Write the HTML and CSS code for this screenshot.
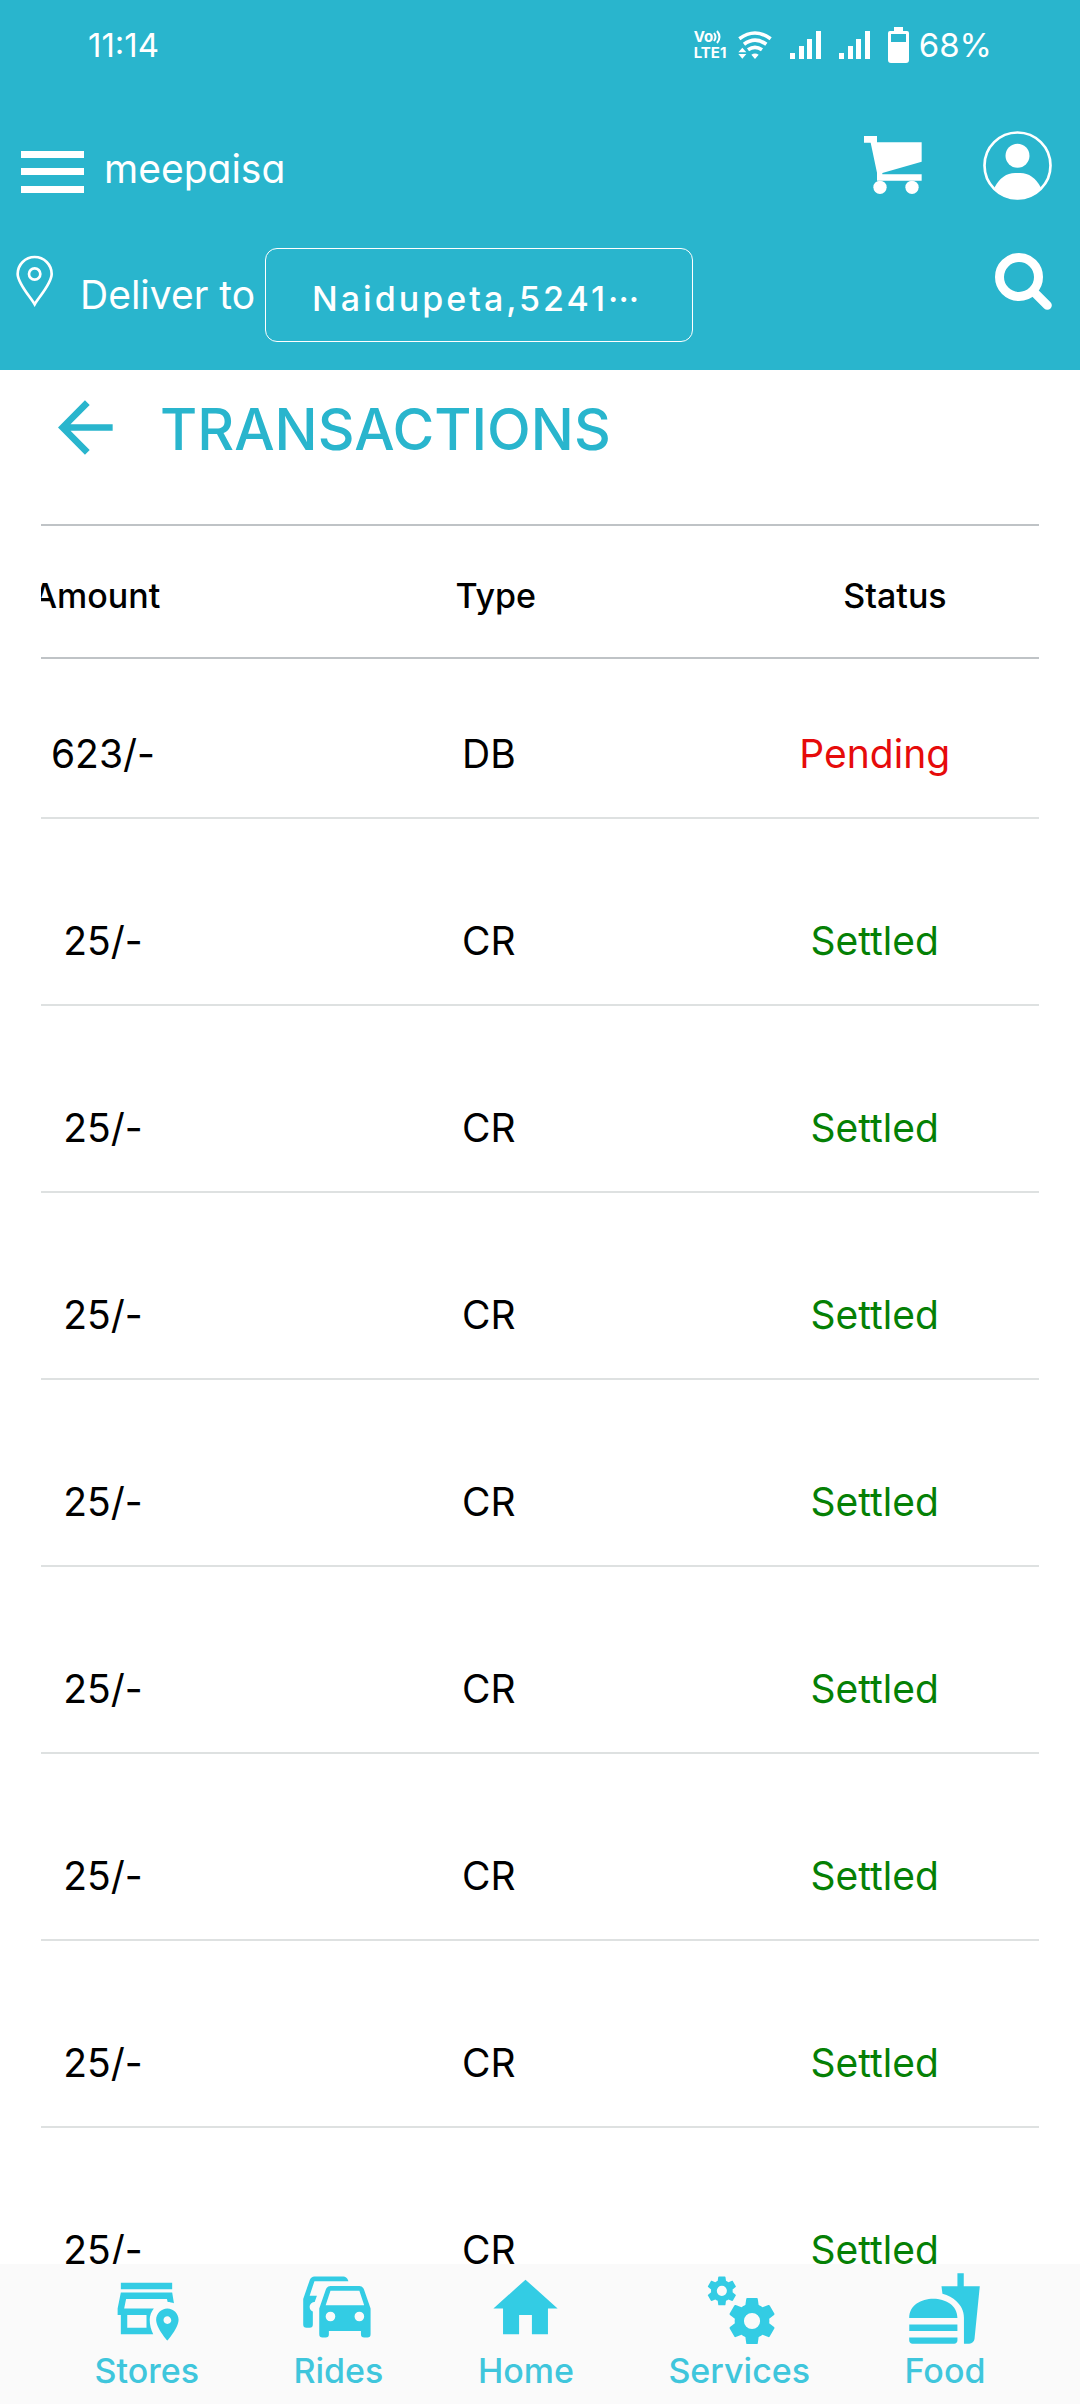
FILE: index.html
```html
<!DOCTYPE html>
<html lang="en">
<head>
<meta charset="utf-8">
<meta name="viewport" content="width=device-width, initial-scale=1">
<title>meepaisa - Transactions</title>
<link rel="stylesheet" href="styles.css">
</head>
<body>
<header class="header">
  <div class="status-bar">
    <span class="status-text">11:14</span>
    <div class="status-icons">
      <div class="status-group network">
        <div class="volte">
          <span class="volte-line">Vo<svg width="9" height="14" viewBox="0 0 9 14" fill="none" stroke="currentColor" stroke-width="2"><path d="M1 3Q4 7 1 11M4 1Q9 7 4 13"/></svg></span>
          <span class="volte-line">LTE1</span>
        </div>
        <svg width="34" height="28" viewBox="182 57 102 84" fill="none" stroke="#fff" stroke-width="11"><path d="M186 80Q233 46 280 80M200 97Q233 72 267 97M212 113Q233 99 254 113"/><path stroke="none" fill="#fff" d="M222 128Q233 121 244 128L233 141zM183 121L195 107L207 121zM183 126H207L195 140z"/></svg>
      </div>
      <svg width="31" height="28" viewBox="0 0 31 28" fill="#fff"><path d="M0 22h5v6H0zM9 15h5v13H9zM17 8h5v20h-5zM26 0h5v28h-5z"/></svg>
      <svg width="31" height="28" viewBox="0 0 31 28" fill="#fff"><path d="M0 22h5v6H0zM9 15h5v13H9zM17 8h5v20h-5zM26 0h5v28h-5z"/></svg>
      <div class="status-group battery">
        <svg width="21" height="36" viewBox="0 0 21 36" fill="#fff" fill-rule="evenodd"><path d="M6 0H15V4H19Q21 4 21 6V33Q21 36 18 36H3Q0 36 0 33V6Q0 4 2 4H6zM3 7V15H18V7z"/></svg>
        <span class="status-text">68%</span>
      </div>
    </div>
  </div>

  <div class="brand-row">
    <div class="brand">
      <button class="icon-button" aria-label="Open menu"><svg width="63" height="42" viewBox="0 0 63 42" fill="#fff"><path d="M0 0h63v7H0zM0 17h63v7H0zM0 35h63v7H0z"/></svg></button>
      <a class="brand-name" href="#">meepaisa</a>
    </div>
    <div class="account">
      <button class="icon-button" aria-label="Cart"><svg width="58" height="58" viewBox="0 0 174 174" fill="#fff"><path d="M0 0H39V19H173V77L55 111V115H173V134H39V110L20 20H0z"/><circle cx="48" cy="154" r="20"/><circle cx="144" cy="154" r="20"/></svg></button>
      <button class="icon-button" aria-label="Account"><svg width="69" height="69" viewBox="432 62 207 207" fill="#fff"><circle cx="535.5" cy="165.500" r="99" fill="none" stroke="#fff" stroke-width="8"/><circle cx="535.5" cy="136" r="36"/><path d="M466 232Q490 188 528 188H544Q582 188 606 232Q578 267 535.500 267T466 232z"/></svg></button>
    </div>
  </div>

  <div class="deliver-row">
    <svg class="pin" width="38" height="52" viewBox="47 104 114 156" fill="none" stroke="#fff" stroke-width="8"><path d="M103 252C92 232 52 190 52 161A51 51 0 0 1 154 161C154 190 114 232 103 252z"/><circle cx="103" cy="161" r="17"/></svg>
    <span class="deliver-label">Deliver to</span>
    <button class="place">Naidupeta,5241<span class="place-more">···</span></button>
    <button class="icon-button search" aria-label="Search"><svg width="57" height="57" viewBox="468 429 171 171" fill="none" stroke="#fff" stroke-width="27"><circle cx="540" cy="501" r="58.500"/><path d="M583 544L625 586" stroke-linecap="round"/></svg></button>
  </div>
</header>

<main class="content">
  <div class="title-row">
    <button class="icon-button back" aria-label="Back"><svg width="55" height="55" viewBox="173 538 165 165" fill="none" stroke="currentColor" stroke-width="20"><path d="M337 620.500H190M261 546L187 620.500L261 695"/></svg></button>
    <h1 class="title">TRANSACTIONS</h1>
  </div>
  <div class="table-wrap">
    <table class="transactions">
      <thead><tr><th>Amount</th><th>Type</th><th>Status</th></tr></thead>
      <tbody>
        <tr><td>623/-</td><td>DB</td><td class="pending">Pending</td></tr>
        <tr><td>25/-</td><td>CR</td><td class="settled">Settled</td></tr>
        <tr><td>25/-</td><td>CR</td><td class="settled">Settled</td></tr>
        <tr><td>25/-</td><td>CR</td><td class="settled">Settled</td></tr>
        <tr><td>25/-</td><td>CR</td><td class="settled">Settled</td></tr>
        <tr><td>25/-</td><td>CR</td><td class="settled">Settled</td></tr>
        <tr><td>25/-</td><td>CR</td><td class="settled">Settled</td></tr>
        <tr><td>25/-</td><td>CR</td><td class="settled">Settled</td></tr>
        <tr><td>25/-</td><td>CR</td><td class="settled">Settled</td></tr>
      </tbody>
    </table>
  </div>
</main>

<nav class="tabs">
  <a class="tab" href="#"><svg class="tab-icon" viewBox="0 0 24 24" fill-rule="evenodd"><path d="M4 4H20V6H4zM4 7L3 12V14H4V20H14.100C13.400 18.700 13 17 13 15.500C13 14.200 13.500 13 14.300 12H5.040L5.640 9H18.360L18.600 10C19.300 10 20 10.200 20.550 10.400L20 7zM6 14H12V18H6z"/><path d="M22 15.500C22 18.100 18.500 22 18.500 22S15 18.100 15 15.500C15 13.600 16.600 12 18.500 12S22 13.600 22 15.500M19.700 15.600C19.700 15 19.100 14.400 18.500 14.400S17.300 14.900 17.300 15.600C17.300 16.200 17.800 16.800 18.500 16.800S19.800 16.200 19.700 15.600"/></svg>Stores</a>
  <a class="tab" href="#"><svg class="tab-icon" viewBox="0 0 24 24"><path d="M8,11L9.5,6.5H18.5L20,11M18.5,16A1.5,1.5 0 0,1 17,14.5A1.5,1.5 0 0,1 18.5,13A1.5,1.5 0 0,1 20,14.5A1.5,1.5 0 0,1 18.5,16M9.5,16A1.5,1.5 0 0,1 8,14.5A1.5,1.5 0 0,1 9.5,13A1.5,1.5 0 0,1 11,14.5A1.5,1.5 0 0,1 9.5,16M19.92,6C19.71,5.4 19.14,5 18.5,5H9.5C8.86,5 8.29,5.4 8.08,6L6,12V20A1,1 0 0,0 7,21H8A1,1 0 0,0 9,20V19H19V20A1,1 0 0,0 20,21H21A1,1 0 0,0 22,20V12L19.92,6M14.92,3C14.71,2.4 14.14,2 13.5,2H4.5C3.86,2 3.29,2.4 3.08,3L1,9V17A1,1 0 0,0 2,18H3A1,1 0 0,0 4,17V12.91C3.22,12.63 2.82,11.77 3.1,11C3.32,10.4 3.87,10 4.5,10H4.57L5.27,8H3L4.5,3.5H15.09L14.92,3Z"/></svg>Rides</a>
  <a class="tab" href="#"><svg class="tab-icon" viewBox="0 0 24 24"><path d="M10,20V14H14V20H19V12H22L12,3L2,12H5V20H10Z"/></svg>Home</a>
  <a class="tab" href="#"><svg class="tab-icon" viewBox="0 0 24 24"><defs><path id="cog" d="M12,15.5A3.5,3.5 0 0,1 8.5,12A3.5,3.5 0 0,1 12,8.5A3.5,3.5 0 0,1 15.5,12A3.5,3.5 0 0,1 12,15.5M19.43,12.97C19.47,12.65 19.5,12.33 19.5,12C19.5,11.67 19.47,11.34 19.43,11L21.54,9.37C21.73,9.22 21.78,8.95 21.66,8.73L19.66,5.27C19.54,5.05 19.27,4.96 19.05,5.05L16.56,6.05C16.04,5.66 15.5,5.32 14.87,5.07L14.5,2.42C14.46,2.18 14.25,2 14,2H10C9.75,2 9.54,2.18 9.5,2.42L9.13,5.07C8.5,5.32 7.96,5.66 7.44,6.05L4.95,5.05C4.73,4.96 4.46,5.05 4.34,5.27L2.34,8.73C2.21,8.95 2.27,9.22 2.46,9.37L4.57,11C4.53,11.34 4.5,11.67 4.5,12C4.5,12.33 4.53,12.65 4.57,12.97L2.46,14.63C2.27,14.78 2.21,15.05 2.34,15.27L4.34,18.73C4.46,18.95 4.73,19.03 4.95,18.95L7.44,17.94C7.96,18.34 8.5,18.68 9.13,18.93L9.5,21.58C9.54,21.82 9.75,22 10,22H14C14.25,22 14.46,21.82 14.5,21.58L14.87,18.93C15.5,18.67 16.04,18.34 16.56,17.94L19.05,18.95C19.27,19.03 19.54,18.95 19.66,18.73L21.66,15.27C21.78,15.05 21.73,14.78 21.54,14.63L19.43,12.97Z"/></defs><use href="#cog" transform="translate(7.260 7.260) scale(.72)"/><use href="#cog" transform="translate(1.100 1.100) scale(.45)"/></svg>Services</a>
  <a class="tab" href="#"><svg class="tab-icon" viewBox="0 0 24 24"><path d="M18.060 22.990h1.660c.84 0 1.530-.64 1.630-1.460L23 5.050h-5V1h-1.970v4.050h-4.970l.3 2.340c1.710.47 3.310 1.320 4.270 2.260 1.440 1.420 2.430 2.890 2.430 5.290v8.050zM1 21.990V21h15.030v.99c0 .55-.45 1-1.010 1H2.010c-.56 0-1.010-.45-1.010-1zm15.030-7c0-8-15.030-8-15.030 0h15.030zM1.020 17h15v2h-15z"/></svg>Food</a>
</nav>
</body>
</html>
```
FILE: styles.css
```css
:root {
  --brand: #29b5cd;
  --tab: #33cce4;
}

* {
  box-sizing: border-box;
}

body {
  margin: 0;
  height: 100vh;
  display: flex;
  flex-direction: column;
  background: #fff;
  color: #000;
  font-family: Inter, "Liberation Sans", sans-serif;
}

svg {
  display: block;
  flex: none;
}

button {
  font: inherit;
  color: inherit;
  background: none;
  border: 0;
  padding: 0;
}

a {
  color: inherit;
  text-decoration: none;
}

.header {
  flex: none;
  background: var(--brand);
  color: #fff;
  padding-bottom: 28px;
}

/* status bar */
.status-bar {
  height: 90px;
  padding: 0 88px;
  display: flex;
  align-items: center;
  justify-content: space-between;
}

.status-text {
  font-size: 33px;
  line-height: 40px;
}

.status-icons,
.status-group {
  display: flex;
  align-items: center;
  gap: 18px;
}

.status-group.network,
.status-group.battery {
  gap: 10px;
}

.volte {
  width: 34px;
  font-size: 15px;
  line-height: 16px;
  font-weight: 700;
}

.volte-line {
  display: flex;
  align-items: center;
}

/* brand row */
.brand-row {
  height: 150px;
  padding: 0 28px 0 21px;
  display: flex;
  align-items: center;
  justify-content: space-between;
}

.brand {
  display: flex;
  align-items: center;
  gap: 20px;
  padding-top: 14px;
}

.brand-name {
  padding-bottom: 6px;
  font-size: 39px;
  line-height: 48px;
  font-feature-settings: "cv11";
}

.account {
  display: flex;
  align-items: center;
  gap: 61px;
}

/* delivery row */
.deliver-row {
  padding: 8px 28px 0 16px;
  display: flex;
  align-items: flex-start;
}

.pin {
  margin-top: 7px;
}

.deliver-label {
  margin: 0 10px 0 26px;
  font-size: 39px;
  line-height: 94px;
}

.place {
  width: 428px;
  height: 94px;
  padding: 6px 46px 0;
  border: 1px solid #fff;
  border-radius: 12px;
  font-size: 34px;
  font-weight: 500;
  letter-spacing: 3px;
  text-align: left;
  white-space: nowrap;
}

.place-more {
  letter-spacing: 0;
}

.search {
  margin: 5px 0 0 auto;
}

/* page content */
.content {
  flex: 1;
  min-height: 0;
  overflow: hidden;
}

.title-row {
  height: 114px;
  margin-bottom: 40px;
  padding-left: 58px;
  display: flex;
  align-items: center;
  gap: 47px;
  color: var(--brand);
}

.title {
  margin: 0;
  padding-top: 6px;
  font-size: 57px;
  line-height: 64px;
  font-weight: 500;
}

.table-wrap {
  margin: 0 41px;
  overflow: hidden;
  border-top: 2px solid #bfc3c6;
}

.transactions,
.transactions thead,
.transactions tbody {
  display: block;
}

.transactions tr {
  display: grid;
  grid-template-columns: repeat(3, 1fr);
}

.transactions thead tr {
  width: 120%;
  margin-left: -144px;
  border-bottom: 2px solid #bfc3c6;
}

.transactions tbody tr {
  width: 116%;
  margin-left: -131px;
  border-bottom: 2px solid #dee1e1;
}

.transactions th {
  padding: 50px 0 41px;
  font-size: 34px;
  line-height: 40px;
  font-weight: 500;
}

.transactions td {
  padding: 98px 0 39px;
  font-size: 39px;
  line-height: 48px;
  text-align: center;
}

.transactions tbody tr:first-child td {
  padding-top: 71px;
}

.transactions .pending {
  color: #e60b0b;
}

.transactions .settled {
  color: #058005;
}

/* bottom navigation */
.tabs {
  flex: none;
  height: 140px;
  padding-top: 6px;
  display: flex;
  justify-content: space-evenly;
  background: #fafafa;
}

.tab {
  display: flex;
  flex-direction: column;
  align-items: center;
  width: min-content;
  color: #3fc6dc;
  font-size: 34px;
  line-height: 40px;
  font-weight: 500;
  gap: 4px;
}

.tab-icon {
  width: 77px;
  height: 77px;
  fill: var(--tab);
}
```
